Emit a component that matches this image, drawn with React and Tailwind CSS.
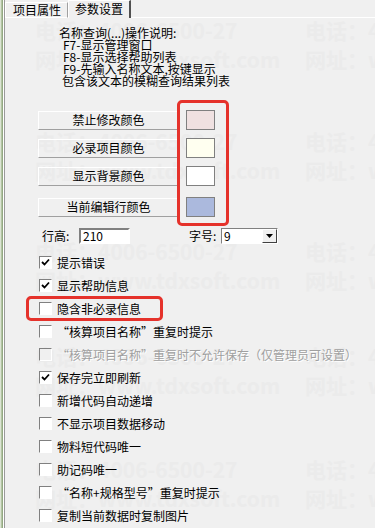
const font = { fontFamily: '"Noto Sans CJK SC", "Noto Sans", sans-serif' };

const swatchRows = [
  { label: "禁止修改颜色", color: "bg-[#f0e1e1]", mt: "mt-0" },
  { label: "必录项目颜色", color: "bg-[#fffff0]", mt: "mt-[8px]" },
  { label: "显示背景颜色", color: "bg-[#ffffff]", mt: "mt-[8px]" },
  { label: "当前编辑行颜色", color: "bg-[#abb9dd]", mt: "mt-[11px]" },
];

const options = [
  { label: "提示错误", checked: true },
  { label: "显示帮助信息", checked: true },
  { label: "隐含非必录信息" },
  { label: "“核算项目名称”重复时提示" },
  { label: "“核算项目名称”重复时不允许保存（仅管理员可设置）", disabled: true },
  { label: "保存完立即刷新", checked: true },
  { label: "新增代码自动递增" },
  { label: "不显示项目数据移动" },
  { label: "物料短代码唯一" },
  { label: "助记码唯一" },
  { label: "“名称+规格型号”重复时提示" },
  { label: "复制当前数据时复制图片" },
];

const marks = [20, 131, 241, 346, 459];

// faint background watermark of the screenshot
function Watermark() {
  return (
    <div className="absolute inset-0 pointer-events-none overflow-hidden text-[21px] font-bold text-[#ebebeb] leading-none">
      {marks.map((top) => (
        <div key={top}>
          <div className="absolute left-[30px] whitespace-nowrap" style={{ top }}>电话：4006-6500-27</div>
          <div className="absolute left-[30px] whitespace-nowrap" style={{ top: top + 29 }}>网址：www.tdxsoft.com</div>
          <div className="absolute left-[300px] whitespace-nowrap" style={{ top }}>电话：40</div>
          <div className="absolute left-[300px] whitespace-nowrap" style={{ top: top + 29 }}>网址：w</div>
        </div>
      ))}
    </div>
  );
}

function CheckBox({ checked, disabled }) {
  return (
    <div
      className={`w-[13px] h-[13px] shrink-0 border border-t-[#808080] border-l-[#808080] border-b-[#ffffff] border-r-[#ffffff] ${
        disabled ? "bg-[#f0f0f0]" : "bg-white"
      } flex items-center justify-center`}
    >
      {checked && (
        <svg width="9" height="9" viewBox="0 0 9 9">
          <path d="M1 4 L3.5 6.5 L8 1.5" stroke="#000" strokeWidth="1.8" fill="none" />
        </svg>
      )}
    </div>
  );
}

export default function App() {
  return (
    <div className="relative w-[375px] h-[528px] bg-[#f0f0f0] overflow-hidden flex text-[12px] text-black" style={font}>
      {/* left frame */}
      <div className="flex shrink-0">
        <div className="w-px bg-[#dbe4d3]"></div>
        <div className="w-px bg-[#b3c4a3]"></div>
        <div className="w-px bg-[#93a883]"></div>
        <div className="w-px bg-white"></div>
        <div className="w-px bg-[#9a9a9a]"></div>
      </div>

      <div className="relative flex-1 flex flex-col">
        <Watermark />

        {/* tabs */}
        <div className="relative flex items-end h-[18px] shrink-0">
          <div className="h-[16px] w-[63px] border-t border-l border-white border-r border-r-[#a0a0a0] border-b border-b-white flex items-center pl-[7px] leading-none">
            项目属性
          </div>
          <div className="h-[18px] w-[63px] border-t border-l border-white border-r-2 border-r-[#505050] flex items-center pl-[6px] pb-[1px] leading-none">
            参数设置
          </div>
          <div className="flex-1 h-px bg-white"></div>
        </div>

        {/* content */}
        <div className="relative flex flex-col">
          <div className="mt-[9px] ml-[54px] leading-[12px] whitespace-nowrap">
            <div>名称查询(...)操作说明:</div>
            <div className="pl-[4px]">F7-显示管理窗口</div>
            <div className="pl-[4px]">F8-显示选择帮助列表</div>
            <div className="pl-[4px]">F9-先输入名称文本,按键显示</div>
            <div className="pl-[3px]">包含该文本的模糊查询结果列表</div>
          </div>

          <div className="mt-[23px] flex flex-col">
            {swatchRows.map((r) => (
              <div key={r.label} className={`${r.mt} flex items-center h-[20px] ml-[33px]`}>
                <div className="w-[141px] h-[19px] border-t border-l border-white border-b border-r border-b-[#a0a0a0] border-r-[#b0b0b0] flex items-center justify-center leading-none">
                  {r.label}
                </div>
                <div className={`ml-[7px] w-[29px] h-[20px] border border-[#808080] ${r.color}`}></div>
              </div>
            ))}
          </div>

          {/* row height / font size */}
          <div className="mt-[11px] flex items-center h-[16px]">
            <span className="ml-[37px] w-[37px] leading-none">行高:</span>
            <div className="w-[51px] h-[16px] bg-white border-2 border-t-[#808080] border-l-[#808080] border-b-white border-r-white flex items-center pl-[2px] leading-none">
              210
            </div>
            <span className="ml-[59px] w-[32px] leading-none">字号:</span>
            <div className="w-[57px] h-[16px] bg-white border border-t-[#808080] border-l-[#808080] border-b-white border-r-white flex items-center justify-between leading-none">
              <span className="pl-[2px]">9</span>
              <div className="w-[15px] h-[14px] bg-[#f0f0f0] border border-t-white border-l-white border-b-[#404040] border-r-[#404040] flex items-center justify-center">
                <svg width="7" height="4" viewBox="0 0 7 4">
                  <path d="M0 0 H7 L3.5 4 Z" fill="#000" />
                </svg>
              </div>
            </div>
          </div>

          {/* options */}
          <div className="mt-[7px] flex flex-col">
            {options.map((o) => (
              <div key={o.label} className="h-[23px] flex items-center pl-[34px] whitespace-nowrap">
                <CheckBox checked={o.checked} disabled={o.disabled} />
                <span
                  className={`ml-[5px] leading-none ${o.disabled ? "text-[#a0a0a0]" : "text-black"}`}
                  style={o.disabled ? { textShadow: "1px 1px 0 #fff" } : undefined}
                >
                  {o.label}
                </span>
              </div>
            ))}
          </div>
        </div>

        {/* red annotations */}
        <div className="absolute left-[172px] top-[100px] w-[52px] h-[126px] border-[3px] border-[#e5322b] rounded-[5px] pointer-events-none"></div>
        <div className="absolute left-[21px] top-[296px] w-[137px] h-[25px] border-[3px] border-[#e5322b] rounded-[5px] pointer-events-none"></div>
      </div>
    </div>
  );
}
